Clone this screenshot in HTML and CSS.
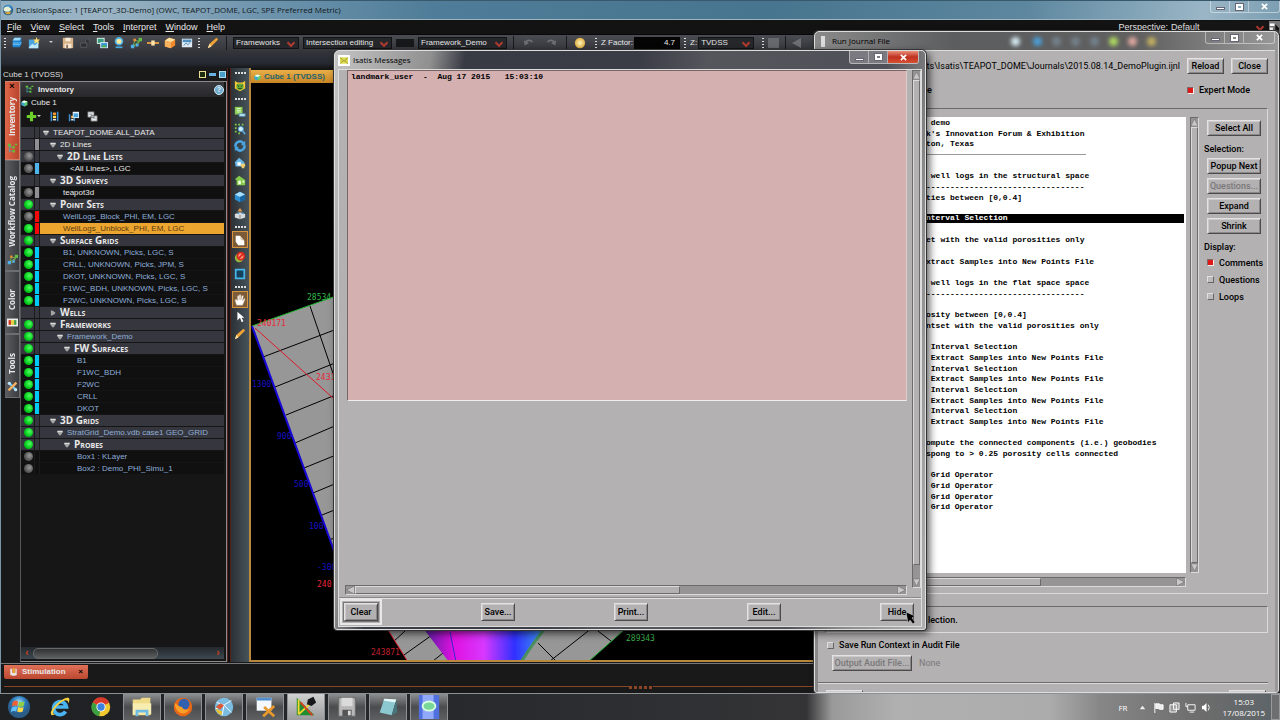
FILE: index.html
```html
<!DOCTYPE html>
<html lang="en">
<head>
<meta charset="utf-8">
<title>DecisionSpace</title>
<link rel="stylesheet" href="styles.css">
</head>
<body>
<svg class="defs" aria-hidden="true">
  <defs>
    <radialGradient id="gBall"><stop offset="0" stop-color="#fff6c0"/><stop offset="1" stop-color="#e0b040"/></radialGradient>
    <radialGradient id="gOrb" cx=".5" cy=".3"><stop offset="0" stop-color="#a8e4ff"/><stop offset=".6" stop-color="#2a78b8"/><stop offset="1" stop-color="#2c5c88"/></radialGradient>
  </defs>
  <symbol id="cube" viewBox="0 0 14 14"><path d="M1 4l6-3 6 3v6l-6 3-6-3z" fill="#2d8fd2"/><path d="M1 4l6-3 6 3-6 3z" fill="#a5deff"/><path d="M7 7l6-3v6l-6 3z" fill="#1764a0"/></symbol>
  <symbol id="layers" viewBox="0 0 14 14"><path d="M4 1h8v8l-2 3H2V4z" fill="#1f83cc"/><path d="M4 1h8l-2 3H2z" fill="#9bdcff"/><path d="M2 7h8M2 9h8l2-3" stroke="#7fd0ff" fill="none"/></symbol>
  <symbol id="newchart" viewBox="0 0 14 14"><path d="M1 3h5l2 2h4v8H1z" fill="#4aa4e0"/><path d="M1 12l4-4 3 2 4-4v7H1z" fill="#bfe8ff"/><path d="M10 0l1 3 3 0-2 2 1 3-3-2-3 2 1-3-2-2h3z" fill="#ffe070"/></symbol>
  <symbol id="save" viewBox="0 0 14 14"><path d="M1 1h12v12H1z" fill="#d8b488"/><path d="M4 1h6v4H4zM3 8h8v5H3z" fill="#f5ead8"/><path d="M5 9h2v4H5z" fill="#8a6a48"/></symbol>
  <symbol id="lock" viewBox="0 0 14 14"><path d="M2 7h7v5H2zM8 7V4a2 2 0 0 1 4 0v2" fill="#2c2e32" stroke="#5a5d64"/></symbol>
  <symbol id="images" viewBox="0 0 14 14"><path d="M1 1h9v7H1z" fill="#e8fff0"/><path d="M2 2h7v5H2z" fill="#3b9a80"/><path d="M5 6h9v7H5z" fill="#e8f4ff"/><path d="M6 7h7v5H6z" fill="#3c9ad0"/><path d="M6 12l3-3 4 3z" fill="#50b040"/></symbol>
  <symbol id="globe" viewBox="0 0 14 14"><circle cx="7" cy="5" r="4" fill="#ffe99a" stroke="#4ab0e8" stroke-width="2"/><path d="M3 11h8v2H3z" fill="#48a8e0"/></symbol>
  <symbol id="nodes" viewBox="0 0 14 14"><path d="M3 11L6 4l5 1-3 5-5 1 8-6" stroke="#7ac050" fill="none"/><path d="M1 9h4v4H1zM7 8h3v3H7z" fill="#4eb0ea"/><path d="M4 2h3v3H4z" fill="#e89030"/><path d="M10 1h4v4h-4z" fill="#62c048"/></symbol>
  <symbol id="link" viewBox="0 0 14 14"><path d="M0 6h14v2H0z" fill="#f0a848"/><path d="M5 4h4v6H5z" fill="#ffe2a8"/></symbol>
  <symbol id="obox" viewBox="0 0 14 14"><path d="M1 4l5-3 7 2v7l-5 3-7-2z" fill="#ef8b2c"/><path d="M1 4l5-3 7 2-5 3z" fill="#fbe0a0"/><path d="M1 4l7 2v7l-7-2z" fill="#f7b260"/></symbol>
  <symbol id="card" viewBox="0 0 14 14"><path d="M1 2h12v10H1z" fill="#dfeaf4"/><path d="M2 3h10v3H2z" fill="#4d8fc0"/><path d="M3 10l3-3 2 2 3-3" stroke="#3c80b0" fill="none"/></symbol>
  <symbol id="pencil" viewBox="0 0 14 14"><path d="M1 13l2-5 8-7 2 2-8 8z" fill="#f2a336"/><path d="M1 13l2-5 2 3z" fill="#fbe3b0"/></symbol>
  <symbol id="grid" viewBox="0 0 14 14"><path d="M1 1h9v9H1z" fill="#86c850"/><path d="M3 3h5M3 5h5M3 7h5" stroke="#e8ffd8"/><path d="M6 9h7v3H6z" fill="#c8e8f8" stroke="#5090b0"/></symbol>
  <symbol id="face" viewBox="0 0 14 14"><path d="M1 1l3 2h6l3-2v9l-6 3-6-3z" fill="#f0c838"/><path d="M3 5l4-1 4 1v5l-4 2-4-2z" fill="#64a83a"/><path d="M4 6l2 2M10 6L8 8M5 10h4" stroke="#163a10" stroke-width="1"/></symbol>
  <symbol id="lens" viewBox="0 0 14 14"><path d="M1 1h2v2H1zM5 1h2v2H5zM9 1h2v2H9zM1 5h2v2H1zM1 9h2v2H1zM5 11h2v2H5z" fill="#7fcf4a"/><circle cx="8" cy="7" r="3" fill="#cceeff" stroke="#4a9cd0" stroke-width="1"/><path d="M10 9l3 4" stroke="#58a8d8" stroke-width="2"/></symbol>
  <symbol id="cycle" viewBox="0 0 14 14"><path d="M2 8a5 5 0 0 1 9-4M12 6a5 5 0 0 1-9 4" stroke="#4ba4e0" stroke-width="3" fill="none"/><path d="M8 6h5V1zM6 8H1v5z" fill="#4ba4e0"/></symbol>
  <symbol id="homeb" viewBox="0 0 14 14"><path d="M1 6l5-5 6 5v5H2z" fill="#6ab8e8"/><path d="M4 6h4v4H4z" fill="#fff"/><path d="M8 8h5v3H8zM9 11h3v2H9z" fill="#f0cf70"/></symbol>
  <symbol id="homeg" viewBox="0 0 14 14"><path d="M1 6l5-4 7 5v6H3V7z" fill="#86cc4c"/><path d="M5 8h3v4H5zM10 8h2v2h-2z" fill="#f4ffe8"/></symbol>
  <symbol id="boxup" viewBox="0 0 14 14"><path d="M1 7l6-2 6 2v4l-6 2-6-2z" fill="#d8dadc"/><path d="M7 0l3 4H4z" fill="#e0964a"/><path d="M7 8v5" stroke="#777"/><path d="M4 6h2M9 6h2" stroke="#4a90c0" stroke-width="2"/></symbol>
  <symbol id="shape" viewBox="0 0 14 14"><path d="M2 2h5l5 6v5H5L2 9z" fill="#fff"/><path d="M7 2l5 6-4-1z" fill="#d8c8b0"/></symbol>
  <symbol id="stop" viewBox="0 0 14 14"><circle cx="6" cy="8" r="5" fill="#96b840"/><circle cx="8" cy="6" r="4" fill="#ff9080" stroke="#d82818" stroke-width="2"/><path d="M5 9l6-6" stroke="#d82818" stroke-width="2"/></symbol>
  <symbol id="square" viewBox="0 0 14 14"><path d="M2 2h10v10H2z" fill="#14425c" stroke="#48b4e8" stroke-width="2"/></symbol>
  <symbol id="hand" viewBox="0 0 14 14"><path d="M3 13L1 7l2-1 1 2V2h2v5V1h2v6l1-5h2l-1 6 2-3 1 1-3 7z" fill="#fff" stroke="#b89a78" stroke-width=".5"/></symbol>
  <symbol id="arrow" viewBox="0 0 14 14"><path d="M4 1v10l3-3 2 5 2-1-2-4h3z" fill="#fff"/></symbol>
  <symbol id="tree" viewBox="0 0 14 14"><path d="M3 2v10M3 5h5M3 10h5" stroke="#48a8b0" fill="none"/><path d="M1 1h4v3H1zM7 4h3v3H7zM7 9h3v3H7zM10 1h3v2h-3z" fill="#60c038"/></symbol>
  <symbol id="gcube" viewBox="0 0 14 14"><path d="M1 4l5-3 7 2v7l-6 3-6-3z" fill="#5ccc70"/><path d="M1 4l6 2v7l-6-3z" fill="#3c9fd8"/><path d="M1 4l5-3 7 2-6 3z" fill="#f0fff0"/></symbol>
  <symbol id="plus" viewBox="0 0 14 14"><path d="M5 1h4v4h4v4H9v4H5V9H1V5h4z" fill="#6cd02a"/></symbol>
  <symbol id="book" viewBox="0 0 14 14"><path d="M2 1h2v12H2zM10 1h2v12h-2z" fill="#3c90d0"/><path d="M5 2h4v3H5z" fill="#ff9a30"/><path d="M5 6h4v3H5z" fill="#ffdc50"/><path d="M5 10h4v2H5z" fill="#e8e8e8"/></symbol>
  <symbol id="bookwin" viewBox="0 0 14 14"><path d="M1 4h2v9H1zM7 9h2v4H7z" fill="#3c90d0"/><path d="M4 6h3v3H4z" fill="#ffb040"/><path d="M4 10h3v2H4z" fill="#eee"/><path d="M6 1h8v8H6z" fill="#e8f4ff"/><path d="M7 3h6v5H7z" fill="#4ca4dc"/></symbol>
  <symbol id="wins" viewBox="0 0 14 14"><path d="M1 1h8v7H1zM5 6h8v7H5z" fill="#e8ecf0" stroke="#555"/><path d="M3 4h4M7 9h4" stroke="#777"/></symbol>
  <symbol id="down" viewBox="0 0 14 14"><path d="M1 2h12v3L9 12H5L1 5z" fill="#a4a4a4"/><path d="M1 2h12v3H1z" fill="#ddd"/></symbol>
  <symbol id="right" viewBox="0 0 14 14"><path d="M2 1v12h3l7-4V5L5 1z" fill="#a4a4a4"/></symbol>
  <symbol id="tools" viewBox="0 0 14 14"><path d="M2 2l10 10" stroke="#6cc0f0" stroke-width="3"/><path d="M12 2L2 12" stroke="#f4b060" stroke-width="3"/><circle cx="3" cy="3" r="2" fill="#bce6ff"/><circle cx="11" cy="11" r="2" fill="#bce6ff"/></symbol>
  <symbol id="palette" viewBox="0 0 14 14"><path d="M0 2h14v10H0z" fill="#eee"/><path d="M2 4h3v6H2z" fill="#d03020"/><path d="M5 4h4v6H5z" fill="#e8d040"/><path d="M9 4h3v6H9z" fill="#40a040"/></symbol>
</svg>

<div class="desktop">
  <main class="app">
    <header class="app-title">
      <svg class="orb" viewBox="0 0 14 14"><circle cx="7" cy="7" r="6" fill="url(#gOrb)"/><path d="M2 5c3-3 6-2 9 1-2 3-5 4-9 2z" fill="#e8f0d0"/><path d="M3 9c3 1 5 1 8-1l-2 4H5z" fill="#e0a838"/></svg>
      <h1>DecisionSpace: 1 [TEAPOT_3D-Demo] (OWC, TEAPOT_DOME, LGC, SPE Preferred Metric)</h1>
      <div class="win-buttons">
        <button type="button" aria-label="Minimize"><i class="min"></i></button><button type="button" aria-label="Maximize"><i class="max"></i></button><button type="button" aria-label="Close" class="wide"><svg viewBox="0 0 8 8"><path d="M1 1l6 6M7 1L1 7" stroke="#fff" stroke-width="2"/></svg></button>
      </div>
    </header>
    <nav class="menu">
      <button type="button"><u>F</u>ile</button><button type="button"><u>V</u>iew</button><button type="button"><u>S</u>elect</button><button type="button"><u>T</u>ools</button><button type="button"><u>I</u>nterpret</button><button type="button"><u>W</u>indow</button><button type="button"><u>H</u>elp</button>
      <label class="perspective">Perspective: <span class="pick dark"><select><option>Default</option></select></span></label>
      <button type="button" class="corner" aria-label="Layout"><svg viewBox="0 0 14 14"><path d="M1 2h6v3H1zM1 7h4v5H1z" fill="#fff"/><path d="M8 3v9l2-2 2 3 1-5z" fill="#111"/></svg></button>
    </nav>
    <div class="toolbar">
      <i class="grip-v"></i>
      <div class="icons">
        <button type="button" aria-label="Layers"><svg><use href="#layers"/></svg></button>
        <button type="button" aria-label="New"><svg><use href="#newchart"/></svg></button>
        <button type="button" aria-label="More"><i class="tiny-caret"></i></button>
        <button type="button" aria-label="Save"><svg><use href="#save"/></svg></button>
        <button type="button" aria-label="Lock"><svg><use href="#lock"/></svg></button>
        <button type="button" aria-label="Images"><svg><use href="#images"/></svg></button>
        <button type="button" aria-label="Globe"><svg><use href="#globe"/></svg></button>
        <button type="button" aria-label="Nodes"><svg><use href="#nodes"/></svg></button>
        <button type="button" aria-label="Link"><svg><use href="#link"/></svg></button>
        <button type="button" aria-label="Volume"><svg><use href="#obox"/></svg></button>
        <button type="button" aria-label="Card"><svg><use href="#card"/></svg></button>
      </div>
      <i class="grip-v"></i>
      <button type="button" class="pen" aria-label="Edit"><svg><use href="#pencil"/></svg></button>
      <i class="sep"></i>
      <span class="pick p-a"><select aria-label="Module"><option>Frameworks</option></select></span>
      <span class="pick p-b"><select aria-label="Task"><option>Intersection editing</option></select></span>
      <i class="swatch-btn"></i>
      <span class="pick p-b"><select aria-label="Framework"><option>Framework_Demo</option></select></span>
      <i class="sep"></i>
      <button type="button" class="hist" aria-label="Undo"><svg viewBox="0 0 14 14"><path d="M3 7c1-4 6-4 8-1" stroke="#6e7076" stroke-width="2" fill="none"/><path d="M1 4l1 6 5-3z" fill="#6e7076"/></svg></button>
      <button type="button" class="hist" aria-label="Redo"><svg viewBox="0 0 14 14"><path d="M11 7C10 3 5 3 3 6" stroke="#6e7076" stroke-width="2" fill="none"/><path d="M13 4l-1 6-5-3z" fill="#6e7076"/></svg></button>
      <i class="sep"></i>
      <button type="button" class="ball" aria-label="Light"><svg viewBox="0 0 14 14"><circle cx="7" cy="7" r="6" fill="url(#gBall)"/></svg></button>
      <i class="grip-v gap-left"></i>
      <label class="zfactor">Z Factor: <input type="text" value="4.7"></label>
      <i class="grip-v"></i>
      <label class="zdom">Z: <span class="pick p-c"><select><option>TVDSS</option></select></span></label>
      <i class="grip-v gap-left"></i>
      <i class="stop-btn"></i>
      <i class="sep"></i>
      <i class="back-btn"></i>
    </div>
    <div class="strip"></div>

    <div class="workspace">
      <section class="dock">
        <div class="dock-title"><span>Cube 1 (TVDSS)</span><i class="d1"></i><i class="d2"></i><i class="d3"></i></div>
        <div class="dock-body">
          <div class="rail">
            <button type="button" class="rail-tab on t1"><svg><use href="#tree"/></svg><span>Inventory</span><b>×</b></button>
            <button type="button" class="rail-tab t2"><svg><use href="#nodes"/></svg><span>Workflow Catalog</span></button>
            <button type="button" class="rail-tab t3"><svg><use href="#palette"/></svg><span>Color</span></button>
            <button type="button" class="rail-tab t4"><svg><use href="#tools"/></svg><span>Tools</span></button>
          </div>
          <div class="inventory">
            <h2><svg><use href="#tree"/></svg>Inventory<button type="button" class="help" aria-label="Help">?</button></h2>
            <div class="cube-name"><svg><use href="#gcube"/></svg>Cube 1</div>
            <div class="inv-tools">
              <button type="button" aria-label="Add"><svg><use href="#plus"/></svg><i class="tiny-caret"></i></button>
              <button type="button" aria-label="List"><svg><use href="#book"/></svg></button>
              <button type="button" aria-label="Preview"><svg><use href="#bookwin"/></svg></button>
              <button type="button" aria-label="Windows"><svg><use href="#wins"/></svg></button>
            </div>
            <div class="tree">
              <div class="row head"><i class="dotless"></i><i class="sw"></i><span class="l0"><svg><use href="#down"/></svg>TEAPOT_DOME.ALL_DATA</span></div>
              <div class="row head"><i class="dotless"></i><i class="sw grey"></i><span class="l1"><svg><use href="#down"/></svg>2D Lines</span></div>
              <div class="row head"><input type="checkbox" aria-label="2D Line Lists"><i class="sw"></i><span class="l2 cap"><svg><use href="#down"/></svg>2D Line Lists</span></div>
              <div class="row"><input type="checkbox" aria-label="All Lines"><i class="sw sky"></i><span class="l2 leaf">&lt;All Lines&gt;, LGC</span></div>
              <div class="row head"><i class="dotless"></i><i class="sw"></i><span class="l1 cap"><svg><use href="#down"/></svg>3D Surveys</span></div>
              <div class="row"><input type="checkbox" aria-label="teapot3d"><i class="sw grey"></i><span class="l1 leaf">teapot3d</span></div>
              <div class="row head"><input type="checkbox" checked aria-label="Point Sets"><i class="sw"></i><span class="l1 cap"><svg><use href="#down"/></svg>Point Sets</span></div>
              <div class="row blue"><input type="checkbox" aria-label="Block"><i class="sw red"></i><span class="l1 leaf">WellLogs_Block_PHI, EM, LGC</span></div>
              <div class="row picked"><input type="checkbox" checked aria-label="Unblock"><i class="sw red"></i><span class="l1 leaf">WellLogs_Unblock_PHI, EM, LGC</span></div>
              <div class="row head"><input type="checkbox" checked aria-label="Surface Grids"><i class="sw"></i><span class="l1 cap"><svg><use href="#down"/></svg>Surface Grids</span></div>
              <div class="row blue"><input type="checkbox" checked aria-label="B1 grid"><i class="sw cyan"></i><span class="l1 leaf">B1, UNKNOWN, Picks, LGC, S</span></div>
              <div class="row blue"><input type="checkbox" checked aria-label="CRLL grid"><i class="sw cyan"></i><span class="l1 leaf">CRLL, UNKNOWN, Picks, JPM, S</span></div>
              <div class="row blue"><input type="checkbox" checked aria-label="DKOT grid"><i class="sw cyan"></i><span class="l1 leaf">DKOT, UNKNOWN, Picks, LGC, S</span></div>
              <div class="row blue"><input type="checkbox" checked aria-label="F1WC_BDH grid"><i class="sw cyan"></i><span class="l1 leaf">F1WC_BDH, UNKNOWN, Picks, LGC, S</span></div>
              <div class="row blue"><input type="checkbox" checked aria-label="F2WC grid"><i class="sw cyan"></i><span class="l1 leaf">F2WC, UNKNOWN, Picks, LGC, S</span></div>
              <div class="row head"><i class="dotless"></i><i class="sw"></i><span class="l1 cap"><svg><use href="#right"/></svg>Wells</span></div>
              <div class="row head"><input type="checkbox" checked aria-label="Frameworks"><i class="sw"></i><span class="l1 cap"><svg><use href="#down"/></svg>Frameworks</span></div>
              <div class="row head blue"><input type="checkbox" checked aria-label="Framework_Demo"><i class="sw"></i><span class="l2"><svg><use href="#down"/></svg>Framework_Demo</span></div>
              <div class="row head"><input type="checkbox" checked aria-label="FW Surfaces"><i class="sw"></i><span class="l3 cap"><svg><use href="#down"/></svg>FW Surfaces</span></div>
              <div class="row blue"><input type="checkbox" checked aria-label="B1"><i class="sw cyan"></i><span class="l3 leaf">B1</span></div>
              <div class="row blue"><input type="checkbox" checked aria-label="F1WC_BDH"><i class="sw cyan"></i><span class="l3 leaf">F1WC_BDH</span></div>
              <div class="row blue"><input type="checkbox" checked aria-label="F2WC"><i class="sw cyan"></i><span class="l3 leaf">F2WC</span></div>
              <div class="row blue"><input type="checkbox" checked aria-label="CRLL"><i class="sw cyan"></i><span class="l3 leaf">CRLL</span></div>
              <div class="row blue"><input type="checkbox" checked aria-label="DKOT"><i class="sw cyan"></i><span class="l3 leaf">DKOT</span></div>
              <div class="row head"><input type="checkbox" checked aria-label="3D Grids"><i class="sw"></i><span class="l1 cap"><svg><use href="#down"/></svg>3D Grids</span></div>
              <div class="row head blue"><input type="checkbox" checked aria-label="StratGrid"><i class="sw"></i><span class="l2"><svg><use href="#down"/></svg>StratGrid_Demo.vdb case1 GEO_GRID</span></div>
              <div class="row head"><input type="checkbox" checked aria-label="Probes"><i class="sw"></i><span class="l3 cap"><svg><use href="#down"/></svg>Probes</span></div>
              <div class="row blue"><input type="checkbox" aria-label="Box1"><i class="sw"></i><span class="l3 leaf">Box1 : KLayer</span></div>
              <div class="row blue"><input type="checkbox" aria-label="Box2"><i class="sw"></i><span class="l3 leaf">Box2 : Demo_PHI_Simu_1</span></div>
            </div>
            <div class="inv-scroll"><b>‹</b><i></i><b>›</b></div>
          </div>
        </div>
      </section>
      <div class="splitter"></div>
      <div class="side-tools">
        <i class="grip-h"></i>
        <button type="button" aria-label="Face"><svg><use href="#face"/></svg></button>
        <i class="grip-h"></i>
        <button type="button" aria-label="Grid"><svg><use href="#grid"/></svg></button>
        <button type="button" aria-label="Zoom"><svg><use href="#lens"/></svg></button>
        <button type="button" aria-label="Refresh"><svg><use href="#cycle"/></svg></button>
        <button type="button" aria-label="Set home"><svg><use href="#homeb"/></svg></button>
        <button type="button" aria-label="Home"><svg><use href="#homeg"/></svg></button>
        <button type="button" aria-label="Cube"><svg><use href="#cube"/></svg></button>
        <button type="button" aria-label="Export"><svg><use href="#boxup"/></svg></button>
        <i class="grip-h"></i>
        <button type="button" class="boxed" aria-label="Shape"><svg><use href="#shape"/></svg></button>
        <button type="button" aria-label="Clear"><svg><use href="#stop"/></svg></button>
        <button type="button" aria-label="Frame"><svg><use href="#square"/></svg></button>
        <i class="grip-h"></i>
        <button type="button" class="boxed" aria-label="Pan"><svg><use href="#hand"/></svg></button>
        <button type="button" aria-label="Pick"><svg><use href="#arrow"/></svg></button>
        <button type="button" aria-label="Draw"><svg><use href="#pencil"/></svg></button>
      </div>
      <section class="view">
        <h2><svg><use href="#gcube"/></svg>Cube 1 (TVDSS)</h2>
        <svg class="scene" role="img" aria-label="3D view">
          <defs>
            <linearGradient id="surf" x1="0" y1="0" x2="1" y2="0"><stop offset="0" stop-color="#5020a0"/><stop offset=".25" stop-color="#e010e0"/><stop offset=".5" stop-color="#d838ff"/><stop offset=".75" stop-color="#3030ff"/><stop offset="1" stop-color="#40a0f0"/></linearGradient>
          </defs>
          <g transform="translate(-251 -83)">
            <path d="M252 326L336 296 680 580 588 662H408L388 630 333 548z" fill="#979797"/>
            <path d="M263 357l74-28M275 387l60-24M286 415l52-21M295 443l42-18M304 468l32-13M313 493l24-10M322 515l15-6M329 540l8-3M310 306l28 82M393 642l12-11M404 655l28-20M433 661l10-8M538 643l18 18M545 665l47-37M598 631l13 10" stroke="#000" fill="none"/>
            <path d="M423 628l26 34h72l12-18 12-16z" fill="url(#surf)"/>
            <path d="M521 662l12-18 12-16" stroke="#489060" stroke-width="3" fill="none"/>
            <path d="M450 632l6 30" stroke="#3828d0"/>
            <path d="M255 328l78 70M388 630l20 32" stroke="#e01828" fill="none"/>
            <path d="M252 326l84-30M624 630l-36 32" stroke="#20b030" fill="none"/>
            <path d="M252 326l81 222 4 14" stroke="#1808d8" stroke-width="2" fill="none"/>
            <g class="axis">
              <text x="307" y="300" fill="#30b848">28534</text><text x="257" y="326" fill="#e82838">240171</text><text x="316" y="380" fill="#e82838">2431</text>
              <text x="252" y="387" fill="#1810c0">1300</text><text x="277" y="439" fill="#1810c0">900</text><text x="294" y="487" fill="#1810c0">500</text><text x="309" y="529" fill="#1810c0">100</text><text x="317" y="570" fill="#1810c0">-300</text>
              <text x="317" y="587" fill="#e82838">240</text><text x="371" y="655" fill="#c02030">243871</text><text x="626" y="641" fill="#40b850">289343</text>
            </g>
          </g>
        </svg>
      </section>
    </div>
    <footer class="bottom-dock">
      <button type="button"><svg viewBox="0 0 14 14"><path d="M2 2h3v10H2zM10 2h2v10h-2zM5 8h5v5H5z" fill="#e8e8e8"/><path d="M6 1h3v8H6z" fill="#e8b030"/></svg><span>Stimulation</span><b>×</b></button>
      <div class="bottom-line"><i></i></div>
    </footer>
  </main>

  <section class="window journal">
    <header><i class="doc"></i><h2>Run Journal File</h2>
      <div class="blur-icons"><i></i><i></i><i></i><i></i><i></i><i></i><i></i><i></i></div>
      <div class="win-buttons">
        <button type="button" aria-label="Minimize"><i class="min"></i></button><button type="button" aria-label="Maximize"><i class="max"></i></button><button type="button" aria-label="Close" class="wide"><svg viewBox="0 0 8 8"><path d="M1 1l6 6M7 1L1 7" stroke="#fff" stroke-width="2"/></svg></button>
      </div>
    </header>
    <div class="journal-body">
      <div class="path-row"><span>ents\Isatis\TEAPOT_DOME\Journals\2015.08.14_DemoPlugin.ijnl</span><button type="button" class="motif">Reload</button><button type="button" class="motif">Close</button></div>
      <div class="mode-row"><span>e</span><label class="tick"><input type="checkbox" checked>Expert Mode</label></div>
      <div class="journal-frame">
        <div class="lister">
          <div class="listing">
            <div> demo</div><div>k's Innovation Forum &amp; Exhibition</div><div>ton, Texas</div><div class="rule"></div><div></div>
            <div> well logs in the structural space</div><div>---------------------------------</div><div>ties between [0,0.4]</div><div></div>
            <div class="active">nterval Selection</div><div></div>
            <div>et with the valid porosities only</div><div></div>
            <div>xtract Samples into New Points File</div><div></div>
            <div> well logs in the flat space space</div><div>---------------------------------</div><div></div>
            <div>osity between [0,0.4]</div><div>ntset with the valid porosities only</div><div></div>
            <div> Interval Selection</div><div> Extract Samples into New Points File</div>
            <div> Interval Selection</div><div> Extract Samples into New Points File</div>
            <div> Interval Selection</div><div> Extract Samples into New Points File</div>
            <div> Interval Selection</div><div> Extract Samples into New Points File</div><div></div>
            <div>ompute the connected components (i.e.) geobodies</div><div>spong to &gt; 0.25 porosity cells connected</div><div></div>
            <div> Grid Operator</div><div> Grid Operator</div><div> Grid Operator</div><div> Grid Operator</div>
          </div>
          <div class="vbar"><svg viewBox="0 0 8 8"><path d="M4 0l4 8H0z" fill="#c8c8c8" stroke="#666" stroke-width=".5"/></svg><i></i><svg viewBox="0 0 8 8"><path d="M0 0h8L4 8z" fill="#c8c8c8" stroke="#666" stroke-width=".5"/></svg></div>
          <div class="hbar"><svg viewBox="0 0 8 8"><path d="M8 0v8L0 4z" fill="#c8c8c8" stroke="#666" stroke-width=".5"/></svg><i></i><svg viewBox="0 0 8 8"><path d="M0 0v8l8-4z" fill="#c8c8c8" stroke="#666" stroke-width=".5"/></svg></div>
        </div>
        <aside>
          <button type="button" class="motif">Select All</button>
          <h3>Selection:</h3>
          <button type="button" class="motif">Popup Next</button>
          <button type="button" class="motif" disabled>Questions...</button>
          <button type="button" class="motif">Expand</button>
          <button type="button" class="motif">Shrink</button>
          <h3>Display:</h3>
          <label class="tick"><input type="checkbox" checked>Comments</label>
          <label class="tick"><input type="checkbox">Questions</label>
          <label class="tick"><input type="checkbox">Loops</label>
        </aside>
      </div>
      <div class="status-frame">lection.</div>
      <label class="tick audit"><input type="checkbox">Save Run Context in Audit File</label>
      <div class="audit-row"><button type="button" class="motif" disabled>Output Audit File...</button><span>None</span></div>
      <div class="journal-foot"><button type="button" class="motif" aria-label="Run"></button><button type="button" class="motif" aria-label="Cancel"></button></div>
    </div>
  </section>

  <section class="window messages">
    <header><i class="mail"><svg viewBox="0 0 10 8"><path d="M0 0h10v8H0z" fill="#e0dc50"/><path d="M0 0l5 5 5-5M0 8l4-4M10 8L6 4" stroke="#8a8c38" fill="none"/></svg></i><h2>Isatis Messages</h2>
      <div class="win-buttons">
        <button type="button" aria-label="Minimize"><i class="min"></i></button><button type="button" aria-label="Maximize"><i class="max"></i></button><button type="button" aria-label="Close" class="wide red"><svg viewBox="0 0 8 8"><path d="M1 1l6 6M7 1L1 7" stroke="#fff" stroke-width="2"/></svg></button>
      </div>
    </header>
    <div class="messages-body">
      <div class="lister">
        <textarea readonly aria-label="Messages">landmark_user  -  Aug 17 2015   15:03:10</textarea>
        <div class="vbar"><svg viewBox="0 0 8 8"><path d="M4 0l4 8H0z" fill="#c8c8c8" stroke="#666" stroke-width=".5"/></svg><i></i><svg viewBox="0 0 8 8"><path d="M0 0h8L4 8z" fill="#c8c8c8" stroke="#666" stroke-width=".5"/></svg></div>
        <div class="hbar"><svg viewBox="0 0 8 8"><path d="M8 0v8L0 4z" fill="#c8c8c8" stroke="#666" stroke-width=".5"/></svg><i></i><svg viewBox="0 0 8 8"><path d="M0 0v8l8-4z" fill="#c8c8c8" stroke="#666" stroke-width=".5"/></svg></div>
      </div>
      <div class="actions">
        <span class="default"><button type="button" class="motif">Clear</button></span><button type="button" class="motif">Save...</button><button type="button" class="motif">Print...</button><button type="button" class="motif">Edit...</button><button type="button" class="motif">Hide</button>
      </div>
    </div>
  </section>

  <footer class="taskbar">
    <button type="button" aria-label="Start"><svg viewBox="0 0 26 26"><circle cx="13" cy="13" r="12" fill="url(#gOrb)"/><path d="M6 8c2-2 4-2 6-1l-1 5c-2-1-4-1-6 1z" fill="#f06030"/><path d="M13 7c2 1 4 1 6 0l-1 5c-2 1-4 1-6 0z" fill="#90d040"/><path d="M5 14c2-2 4-2 6-1l-1 5c-2-1-4-1-6 1z" fill="#60c0ff"/><path d="M12 13c2 1 4 1 6 0l-1 5c-2 1-4 1-6 0z" fill="#ffd840"/></svg></button>
    <button type="button" aria-label="Internet Explorer"><svg viewBox="0 0 26 26"><path d="M19 18a7 7 0 1 1 1-5H8" fill="none" stroke="#48b4f0" stroke-width="4"/><path d="M4 22C-1 18 15 2 22 3c2 1 1 4 0 6 0-5-5-4-10 1-6 5-9 11-4 11z" fill="#f8d040"/></svg></button>
    <button type="button" aria-label="Chrome"><svg viewBox="0 0 26 26"><circle cx="13" cy="13" r="10" fill="#f0c830"/><path d="M13 13L4 8a10 10 0 0 1 18 0z" fill="#d83a2c"/><path d="M13 13l-2 10A10 10 0 0 1 4 8z" fill="#3ca040"/><circle cx="13" cy="13" r="5" fill="#fff"/><circle cx="13" cy="13" r="4" fill="#3c80e0"/></svg></button>
    <button type="button" class="open" aria-label="Explorer"><svg viewBox="0 0 26 26"><path d="M3 5h8l2-2h9v19H3z" fill="#f0dc88"/><path d="M3 9h20v12H3z" fill="#f8edb0"/><path d="M6 23v-7h14v7h-3v-4H9v4z" fill="#70bce0"/></svg></button>
    <button type="button" class="open" aria-label="Firefox"><svg viewBox="0 0 26 26"><circle cx="13" cy="13" r="10" fill="#e86818"/><circle cx="14" cy="10" r="6" fill="#3060b0"/><path d="M4 9c3 1 4 4 8 4 1 3 4 4 8 2-3 8-15 7-16-6z" fill="#f8a028"/></svg></button>
    <button type="button" class="open" aria-label="DecisionSpace"><svg viewBox="0 0 26 26"><circle cx="13" cy="13" r="10" fill="#7cbce0"/><path d="M5 8l8 3 8-5M4 15l9-4 8 8M13 11l-2 11" stroke="#fff" fill="none"/><path d="M4 15l7 3-1 4c-3-1-5-3-6-7z" fill="#e8c030"/><path d="M9 9l4 2-4 5-5-3z" fill="#d85838"/></svg></button>
    <button type="button" class="open" aria-label="Exceed"><svg viewBox="0 0 26 26"><path d="M4 3h16v14H4z" fill="#f4f8fc"/><path d="M4 3h16v3H4z" fill="#5090d0"/><path d="M12 13l11 10M23 12L11 23" stroke="#e8982c" stroke-width="3"/></svg></button>
    <button type="button" class="open lit" aria-label="Isatis"><svg viewBox="0 0 26 26"><path d="M3 3l19 19H3z" fill="#208c30"/><path d="M5 5v16M5 21L20 7" stroke="#f0d830" stroke-width="2"/><path d="M7 8l13 14" stroke="#d84020" stroke-width="2"/><path d="M15 5l6-3 3 6-5 4-5-2z" fill="#16181c"/></svg></button>
    <button type="button" class="open" aria-label="Disk"><svg viewBox="0 0 26 26"><path d="M4 3h18v20H4z" fill="#b8b8b8" stroke="#666"/><path d="M7 3h12v9H7z" fill="#dadada"/><path d="M8 16h10v7H8z" fill="#555"/><path d="M14 17h3v5h-3z" fill="#ddd"/></svg></button>
    <button type="button" class="open" aria-label="Notes"><svg viewBox="0 0 26 26"><path d="M9 4l13 1-5 17-13-3z" fill="#8cc8d0"/><path d="M9 4l13 1-1 3-13-2z" fill="#e8f8f8"/><path d="M17 22l5-17 1 14z" fill="#48747c"/></svg></button>
    <button type="button" class="open" aria-label="Recorder"><svg viewBox="0 0 26 26"><path d="M2 0h22v26H2z" fill="#5070e0"/><path d="M6 0h12v26H6z" fill="#90a8f8"/><ellipse cx="13" cy="12" rx="8" ry="6" fill="#d8ffe0"/><ellipse cx="13" cy="12" rx="6" ry="4" fill="#78d898"/></svg></button>
    <div class="tray">
      <span>FR</span>
      <svg viewBox="0 0 12 12"><path d="M6 4l3 4H3z" fill="#eee"/></svg>
      <svg viewBox="0 0 12 12"><path d="M2 1v11M3 2h4v1h4v5H7V7H3z" stroke="#fff" fill="#eee"/></svg>
      <svg viewBox="0 0 12 12"><path d="M1 3h7v8H1zM5 1h6v7H5z" stroke="#fff" fill="#999"/></svg>
      <svg viewBox="0 0 12 12"><path d="M3 3h8v6H3zM5 11h5M1 1v4h2" stroke="#fff" fill="none"/></svg>
      <svg viewBox="0 0 12 12"><path d="M1 4h2l3-3v10L3 8H1z" fill="#fff"/><path d="M8 3q2 3 0 6" stroke="#fff" fill="none"/></svg>
      <time>15:03<br>17/08/2015</time>
    </div>
    <i class="peek"></i>
  </footer>
  <svg class="pointer" viewBox="0 0 10 12" aria-hidden="true"><path d="M0 0l9 4-3 2 3 4-2 2-3-4-2 3z" fill="#000" stroke="#ddd" stroke-width=".5"/></svg>
</div>
</body>
</html>
```
FILE: styles.css
```css
* { box-sizing: border-box; }
html, body { margin: 0; height: 100%; }
body { background: #000; color: #e8e8e8; font: 8px/12px "Liberation Sans", Arial, sans-serif; overflow: hidden; }
button, input, select, textarea { font: inherit; color: inherit; margin: 0; padding: 0; border: 0; background: none; border-radius: 0; }
h1, h2, h3 { margin: 0; font: inherit; }
svg { display: block; flex: none; }
.defs { position: absolute; width: 0; height: 0; }
.desktop { position: relative; height: 100vh; display: grid; grid-template-rows: minmax(0, 1fr) 27px; overflow: hidden; }

/* main application */
.app { display: flex; flex-direction: column; min-height: 0; background: #19191a; border-left: 1px solid #7896a8; }
.app-title { height: 20px; flex: none; display: flex; align-items: center; padding-left: 1px; background: linear-gradient(100deg, #8faec2 0, #9bb4c4 8%, #6f95ae 20%, #4f7c98 34%, #47748e 60%, #5d879f 80%, #9ab6c6 94%, #7c9eb2 100%); border-top: 1px solid #38586c; border-bottom: 1px solid #9cb6c4; color: #101820; }
.app-title h1 { flex: 1; padding-left: 2px; font: 8px/12px "Open Sans", sans-serif; white-space: nowrap; }
.orb { width: 12px; height: 12px; }
.win-buttons { display: flex; align-self: flex-start; height: 12px; border: 1px solid rgba(255,255,255,.45); border-top: 0; border-radius: 0 0 3px 3px; overflow: hidden; }
.win-buttons button { width: 19px; display: grid; place-items: center; border-right: 1px solid rgba(255,255,255,.4); }
.win-buttons .wide { width: 30px; border: 0; }
.win-buttons .min { width: 9px; height: 3px; background: #fff; border: 1px solid #667; margin-top: 4px; }
.win-buttons .max { width: 7px; height: 6px; border: 2px solid #fff; outline: 1px solid #667; }
.win-buttons svg { width: 7px; height: 7px; }
.red { background: linear-gradient(#e89078, #c03020 50%, #d85030); }

.menu { height: 14px; flex: none; display: flex; align-items: center; gap: 9px; padding-left: 6px; background: #131313; font-size: 9px; }
.menu button { line-height: 14px; }
.perspective { margin-left: auto; display: flex; align-items: center; gap: 2px; }
.corner { width: 11px; height: 13px; background: #777; }
.corner svg { width: 11px; height: 11px; }
.menu .corner { margin-left: -8px; }

.pick { position: relative; display: block; height: 12px; background: #26272b; border: 1px solid #121316; }
.pick select { appearance: none; display: block; width: 100%; height: 10px; line-height: 10px; padding-left: 2px; color: #e4e4e4; }
.pick::after { content: ""; position: absolute; right: 4px; top: 2px; width: 4px; height: 4px; border: solid #b03a30; border-width: 0 2px 2px 0; transform: rotate(45deg); pointer-events: none; }
.pick.dark { width: 98px; background: #161616; }
.pick.dark select { padding-left: 0; }
.p-a { width: 66px; }
.p-b { width: 89px; }
.p-c { width: 56px; }

.toolbar { height: 17px; flex: none; display: flex; align-items: center; gap: 4px; padding-left: 3px; background: linear-gradient(#4a4c52, #34363c); white-space: nowrap; overflow: hidden; border-top: 1px solid #08080a; }
.toolbar > * { flex: none; }
.icons { display: flex; gap: 3px; }
.icons button, .pen, .hist, .ball { width: 14px; height: 14px; display: grid; place-items: center; }
.icons svg, .pen svg, .hist svg, .ball svg { width: 12px; height: 12px; }
.hist { width: 18px; }
.grip-v { width: 2px; height: 11px; background: repeating-linear-gradient(#ddd 0 1px, transparent 1px 3px); }
.tiny-caret { width: 0; height: 0; border: 2px solid transparent; border-top-color: #ccc; }
.pen { margin-left: 2px; }
.gap-left { margin-left: 4px; }
.sep { width: 1px; height: 14px; background: #17181a; margin: 0 2px; }
.swatch-btn { width: 18px; height: 8px; background: #17181a; }
.zfactor, .zdom { display: flex; align-items: center; gap: 1px; }
.zfactor input { width: 46px; height: 12px; background: #050505; text-align: right; padding-right: 5px; }
.stop-btn { width: 11px; height: 10px; background: #66686e; }
.back-btn { border: 5px solid transparent; border-right: 9px solid #6c6e74; border-left: 0; }
.strip { height: 17px; flex: none; background: linear-gradient(#33353b, #252830 75%, #161719); }

.workspace { flex: 1; min-height: 0; display: flex; padding-bottom: 1px; }
.dock { width: 226px; flex: none; display: flex; flex-direction: column; padding-left: 2px; }
.dock-title { height: 13px; flex: none; display: flex; align-items: center; gap: 3px; color: #ddd; padding-right: 1px; }
.dock-title span { flex: 1; }
.dock-title i { width: 7px; height: 7px; background: #1c2a10; border: 1px solid #e8e090; }
.dock-title .d2 { height: 3px; border: 0; background: #68b0e0; }
.dock-title .d3 { background: #48a0c8; border-color: #a8dcf4; }
.dock-body { flex: 1; min-height: 0; display: flex; }
.rail { width: 17px; flex: none; padding-left: 2px; display: flex; flex-direction: column; }
.rail-tab { width: 15px; display: flex; flex-direction: column-reverse; align-items: center; gap: 7px; padding: 3px 0 5px; background: linear-gradient(90deg, #5c5e62, #3b3c40); border: 1px solid #6c6e72; border-left: 0; font-weight: bold; line-height: 12px; white-space: nowrap; }
.rail-tab span { writing-mode: vertical-rl; transform: rotate(180deg); font-family: "Open Sans", sans-serif; }
.rail-tab svg { width: 11px; height: 11px; }
.rail-tab b { margin-bottom: auto; font-size: 9px; line-height: 8px; color: #000; }
.on { background: linear-gradient(90deg, #e0674a, #b8452c); border-color: #d08068; }
.t1 { height: 79px; } .t2 { height: 111px; } .t3 { height: 63px; } .t4 { height: 64px; }
.inventory { flex: 1; min-width: 0; display: flex; flex-direction: column; border: 1px solid #8a8a8e; border-left-color: #55565a; padding: 0 2px 2px 0; background: #161617; }
.inventory h2 { height: 15px; display: flex; align-items: center; gap: 4px; padding-left: 4px; font-weight: bold; background: linear-gradient(#3a3a3e, #28282b); }
.inventory h2 svg { width: 9px; height: 9px; }
.help { margin-left: auto; width: 10px; height: 10px; border-radius: 5px; background: #70acd0; border: 1px solid #d0e8f4; line-height: 8px; }
.cube-name { height: 12px; display: flex; align-items: center; gap: 3px; }
.cube-name svg { width: 7px; height: 7px; }
.inv-tools { height: 15px; display: flex; gap: 8px; margin-bottom: 3px; padding-left: 5px; align-items: center; }
.inv-tools button { display: flex; align-items: center; }
.inv-tools svg { width: 11px; height: 11px; }
.tree { flex: 1; min-height: 0; overflow: hidden; }
.row { display: grid; grid-template-columns: 13px 6px 1fr; height: 12px; align-items: center; line-height: 11px; white-space: nowrap; border-bottom: 1px solid #151516; background: #101011; }
.row.head { background: #36373e; }
.row input { appearance: none; width: 9px; height: 9px; margin-left: 3px; border-radius: 5px; background: radial-gradient(circle at 60% 40%, #999, #555 60%, #444); }
.row input:checked { background: radial-gradient(circle at 60% 40%, #50ff60, #00c818 60%, #087818); }
.sw { align-self: stretch; border-left: 1px solid #1b1b1d; border-right: 1px solid #1b1b1d; }
.grey { background: #909094; } .sky { background: #50b4ec; } .cyan { background: #00c8f4; } .red.sw { background: #f40808; }
.row span { display: flex; align-items: center; gap: 4px; align-self: stretch; }
.row span svg { width: 6px; height: 6px; }
.l0 { padding-left: 3px; } .l1 { padding-left: 10px; } .l2 { padding-left: 17px; } .l3 { padding-left: 24px; }
.l1.leaf { padding-left: 23px; } .l2.leaf { padding-left: 30px; } .l3.leaf { padding-left: 37px; }
.cap { font-family: "Open Sans", sans-serif; font-size: 10px; font-variant: small-caps; font-weight: bold; }
.blue { color: #8eaed8; }
.picked span { background: #eca52e; color: #5a3a10; }
.inv-scroll { height: 12px; display: grid; grid-template-columns: 12px 1fr 12px; align-items: center; background: linear-gradient(#24282c, #3c4850); color: #d04020; text-align: center; line-height: 10px; font-size: 10px; }
.inv-scroll i { width: 70%; height: 11px; border-radius: 5px; background: linear-gradient(#303234, #5c5e60); border: 1px solid #66686a; }
.splitter { width: 4px; flex: none; border-left: 1px solid #55201c; border-right: 1px solid #55201c; background: #121212; }
.side-tools { width: 18px; flex: none; display: flex; flex-direction: column; align-items: center; background: linear-gradient(90deg, #2c3236, #46525a); }
.side-tools button { width: 16px; height: 17px; flex: none; display: grid; place-items: center; border: 1px solid transparent; }
.side-tools svg { width: 12px; height: 12px; }
.side-tools .boxed { background: #7c5c38; border-color: #d8943c; }
.grip-h { width: 12px; height: 9px; flex: none; background: repeating-linear-gradient(90deg, #ddd 0 2px, transparent 2px 3px) center / 11px 2px no-repeat; }
.view { flex: 1; min-width: 0; display: flex; flex-direction: column; background: #000; border: solid #b8883c; border-width: 0 0 2px 2px; }
.view h2 { height: 15px; flex: none; display: flex; align-items: center; gap: 3px; padding: 3px 0 0 3px; background: linear-gradient(#151515 0 2px, #eab048 2px, #c88424); color: #1c6470; font-weight: bold; }
.view h2 svg { width: 7px; height: 7px; }
.scene { flex: 1; width: 100%; min-height: 0; }
.axis { font: 8px "DejaVu Sans Mono", monospace; }
.bottom-dock { height: 30px; flex: none; border-top: 1px solid #77777a; display: flex; flex-direction: column; justify-content: space-between; align-items: flex-start; padding: 1px 0 6px 3px; background: #19191a; }
.bottom-dock button { width: 84px; height: 14px; display: flex; align-items: center; gap: 4px; padding: 0 5px; background: linear-gradient(#e07058, #bc4830); border-radius: 0 0 2px 2px; font-weight: bold; }
.bottom-dock svg { width: 9px; height: 10px; }
.bottom-dock b { margin-left: auto; color: #000; }
.bottom-line { align-self: stretch; height: 1px; background: #8a4426; }
.bottom-line i { display: block; width: 24px; height: 3px; margin-left: 49%; background: repeating-linear-gradient(90deg, #8a4426 0 3px, #19191a 3px 5px); }

/* floating windows */
.window { position: absolute; display: flex; flex-direction: column; border-radius: 5px 5px 3px 3px; box-shadow: 0 0 0 1px #333, 3px 3px 9px rgba(0,0,0,.7); border: 1px solid #ddd; color: #000; font: 500 9px/12px Roboto, sans-serif; }
.window > header { height: 18px; flex: none; display: flex; align-items: center; gap: 3px; }
.window > header h2 { flex: 1; font: 8px/12px "Open Sans", sans-serif; white-space: nowrap; }
.motif { height: 16px; background: #b3b1b2; border: 1px solid; border-color: #e4e2e3 #4c4a4b #4c4a4b #e4e2e3; box-shadow: inset 1px 1px #cccacb, inset -1px -1px #8a8889; text-align: center; line-height: 13px; white-space: nowrap; }
.motif:disabled { color: #7a7879; }
.tick { display: flex; align-items: center; gap: 5px; }
.tick input { appearance: none; flex: none; width: 7px; height: 7px; background: #bcbabb; border: 1px solid; border-color: #e0e0e0 #666 #666 #e0e0e0; }
.tick input:checked { background: #e01818; border-color: #806868 #eee #eee #806868; }

.lister { flex: 1; min-height: 0; display: grid; }
.vbar, .hbar { display: flex; background: #969495; border: 1px solid; border-color: #6c6a6b #dcdadb #dcdadb #6c6a6b; }
.vbar { flex-direction: column; width: 9px; }
.hbar { height: 10px; }
.vbar svg { width: 7px; height: 9px; }
.hbar svg { width: 9px; height: 8px; }
.vbar i, .hbar i { background: #b3b1b2; border: 1px solid; border-color: #dcdadb #6c6a6b #6c6a6b #dcdadb; }

.journal { left: 814px; top: 31px; right: 1px; bottom: 27px; padding: 0 3px; background: linear-gradient(90deg, #8a8a8a, #5c5d5f 30%, #606060 70%, #999); }
.journal > header { padding-left: 3px; gap: 5px; }
.journal .doc { width: 6px; height: 11px; background: #ddd; border-right: 2px solid #888; }
.journal > header h2 { flex: none; }
.blur-icons { flex: 1; display: flex; justify-content: flex-end; gap: 10px; padding-right: 44px; filter: blur(2px); }
.blur-icons i { width: 9px; height: 9px; border-radius: 5px; background: #74828c; }
.blur-icons i:nth-child(1) { background: #d8ecf4; margin-right: 3px; } .blur-icons i:nth-child(2) { background: #4aa0d8; } .blur-icons i:nth-child(6) { background: #b0dc60; } .blur-icons i:nth-child(7) { background: #e0a8a0; } .blur-icons i:nth-child(8) { background: #c4b060; }
.journal-body { flex: 1; min-height: 0; display: flex; flex-direction: column; overflow: hidden; background: #b3b1b2; padding: 0 7px 0 0; border-top: 1px solid #ddd; }
.path-row { height: 30px; flex: none; display: flex; align-items: center; justify-content: flex-end; gap: 7px; }
.path-row span { font-weight: 400; white-space: nowrap; }
.path-row .motif { width: 37px; }
.mode-row { height: 18px; flex: none; display: flex; align-items: center; justify-content: space-between; padding: 0 18px 0 109px; }
.journal-frame { flex: none; height: 486px; margin: 9px 0 0 7px; display: flex; border: 1px solid; border-color: #6c6a6b #dcdadb #dcdadb #6c6a6b; padding: 8px 6px 6px 2px; }
.journal .lister { grid-template: minmax(0, 1fr) 10px / minmax(0, 1fr) 9px; gap: 4px; }
.listing { background: #fff; padding: 0 2px 0 98px; display: grid; grid-auto-rows: 1fr; height: 395px; box-shadow: 0 61px 0 #fff; font: bold 8px/11px "Liberation Mono", monospace; white-space: pre; }
.listing div { min-height: 0; }
.listing .active { background: #000; color: #fff; height: 9px; line-height: 8px; align-self: center; }
.rule { width: 160px; height: 1px; background: #999; align-self: center; }
.journal .vbar { grid-column: 2; grid-row: 1; }
.journal .vbar i { flex: 1; }
.journal .hbar i { width: 57%; }
.journal .hbar { grid-row: 2; }
.hbar svg:last-child { margin-left: auto; }
.journal aside { width: 62px; flex: none; padding: 3px 0 0 8px; display: flex; flex-direction: column; gap: 4px; }
.journal aside h3 { margin: 4px 0 0 -3px; height: 10px; line-height: 10px; }
.journal aside .tick { height: 13px; white-space: nowrap; }
.status-frame { height: 27px; flex: none; margin: 12px 0 0 7px; border: 1px solid; border-color: #6c6a6b #dcdadb #dcdadb #6c6a6b; padding: 7px 0 0 102px; }
.audit { height: 12px; flex: none; margin: 6px 0 0 9px; }
.audit-row { display: flex; align-items: center; gap: 7px; margin: 4px 0 0 14px; color: #7a7879; }
.audit-row .motif { width: 80px; }
.audit-row span { font-weight: 400; }
.journal-foot { display: flex; justify-content: space-between; margin-top: 11px; padding: 7px 2px 0 8px; border-top: 1px solid #6c6a6b; box-shadow: inset 0 1px #dcdadb; }
.journal-foot .motif { width: 37px; }

.messages { left: 334px; top: 50px; width: 592px; height: 580px; padding: 0 3px 2px; background: linear-gradient(100deg, #c4c4c4 0, #909090 14%, #383a44 19%, #3a3c46 44%, #55565c 54%, #505058 80%, #8a8a8a 88%, #b0b0b0 100%); }
.messages > header { padding: 0 3px 0 0; }
.mail { background: #fff; padding: 2px; }
.mail svg { width: 8px; height: 7px; }
.messages .win-buttons { background: rgba(150,150,155,.6); height: 13px; }
.messages-body { flex: 1; min-height: 0; display: flex; flex-direction: column; background: #b3b1b2; border: 1px solid #ddd; }
.messages .lister { grid-template: minmax(0, 1fr) 10px / minmax(0, 1fr) 9px; column-gap: 5px; row-gap: 2px; padding: 0 0 2px 6px; }
.messages textarea { display: block; width: calc(100% - 2px); height: 331px; margin-left: 2px; resize: none; outline: 0; background: #d5b0b1; border: 1px solid; border-color: #7a6566 #dcc #eee #7a6566; padding: 1px 3px; overflow: hidden; font: bold 8px/9px "Liberation Mono", monospace; }
.messages .vbar { margin-bottom: -5px; }
.messages .vbar i { flex: 0 0 94%; }
.messages .vbar svg:last-child { margin-top: auto; }
.messages .hbar i { width: 58%; }
.actions { height: 29px; flex: none; display: flex; align-items: center; justify-content: space-between; border-top: 1px solid #8a8889; box-shadow: inset 0 1px #e4e4e4; padding: 0 7px 0 1px; }
.actions .motif { width: 34px; height: 18px; line-height: 15px; }
.default { border: 2px solid #e8e8e8; padding: 2px; }
.default .motif { display: block; outline: 1px solid #777; }

/* taskbar */
.taskbar { position: relative; display: flex; gap: 3px; background: linear-gradient(90deg, #1e2022 0, #25282a 30%, #2b2d30 45%, #343436 63%, #9a9a9a 65%, #b0b0b0 70%, #acacac 82%, #868686 86%, #6c6c6c 94%, #5c6468 100%); border-top: 1px solid #8c9094; }
.taskbar button { width: 38px; flex: none; display: grid; place-items: center; }
.taskbar button svg { width: 24px; height: 24px; }
.open { background: linear-gradient(#8c8e90, #4a4c4e 50%, #5e6062); border: 1px solid #8e9092; border-top: 0; border-bottom: 0; }
.lit { background: linear-gradient(#d0d0d0, #989a9c); }
.tray { margin-left: auto; display: flex; align-items: center; gap: 5px; color: #fff; font: 8px/11px "Open Sans", sans-serif; }
.tray span { margin-right: 4px; }
.tray svg { width: 11px; height: 11px; }
.tray time { text-align: center; margin: 0 0 0 6px; }
.peek { width: 9px; margin-left: 3px; border: 1px solid #999; background: #6c7070; }
.pointer { position: absolute; left: 906px; top: 612px; width: 10px; height: 12px; }
```
